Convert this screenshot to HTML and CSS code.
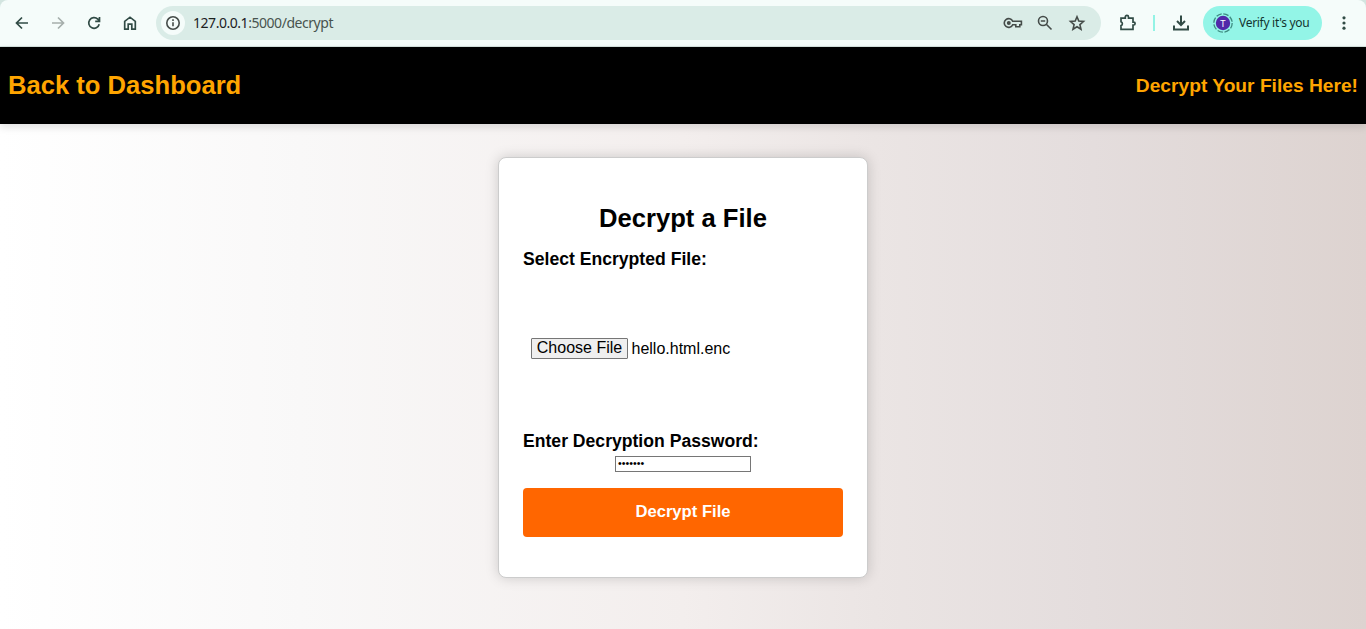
FILE: index.html
```html
<!DOCTYPE html>
<html lang="en">
<head>
<meta charset="utf-8">
<title>Decrypt</title>
<link rel="stylesheet" href="styles.css">
</head>
<body>
<div class="frame"><div class="toolbar">
  <svg class="icon back" viewBox="0 0 20 20"><path d="M16 10H5M10 4.500 4.500 10l5.500 5.500"/></svg>
  <svg class="icon forward" viewBox="0 0 20 20"><path d="M4 10h11M10 4.500 15.500 10 10 15.500"/></svg>
  <svg class="icon reload" viewBox="0 0 20 20"><path d="M15.200 11.200A5.300 5.300 0 1 1 13.800 6.200L15.500 7.900M15.500 4v4.300h-4.300"/></svg>
  <svg class="icon home" viewBox="0 0 20 20"><path d="M4.700 8.300 10 4.200l5.300 4.100v7.900h-3.500v-5H8.200v5H4.700z"/></svg>
  <div class="address">
    <span class="info"><svg class="icon" viewBox="0 0 20 20"><circle cx="10" cy="10" r="6.200"/><path d="M10 9.300v4M10 6.300v1.700"/></svg></span>
    <span class="url"><b>127.0.0.1</b>:5000/decrypt</span>
    <svg class="icon key" viewBox="0 0 20 20"><path d="M9.700 8.300A4.400 4.400 0 1 0 9.700 11.700h3.100v2h4v-2h1.600V8.300z"/><circle class="solid" cx="5.800" cy="10" r="2"/></svg>
    <svg class="icon lens" viewBox="0 0 20 20"><circle cx="8" cy="8" r="4.500"/><path d="M11.300 11.300l5.200 5.200M5.800 8h4.400"/></svg>
    <svg class="icon star" viewBox="0 0 20 20"><path d="M10 3.800l1.800 4.300 4.700.4-3.600 3.100 1.100 4.600-4-2.500-4 2.500 1.100-4.600-3.600-3.100 4.700-.4z"/></svg>
  </div>
  <svg class="icon puzzle" viewBox="0 0 20 20"><path d="M3 5.200h4.300V4a1.600 1.600 0 0 1 3.200 0v1.200H15v4h.7a1.400 1.400 0 0 1 0 2.800H15v4.300H3v-3.700a2 2 0 0 0 0-3.800z"/></svg>
  <span class="divider"></span>
  <svg class="icon download" viewBox="0 0 20 20"><path d="M10 2.500v9M6 8l4 4 4-4M3 12.500v4h14v-4"/></svg>
  <div class="profile">
    <svg class="avatar" viewBox="0 0 20 20"><circle class="ring" cx="10" cy="10" r="9.200"/><circle class="disc" cx="10" cy="10" r="7.200"/><text x="10" y="13.500">T</text></svg>
    <span>Verify it's you</span>
  </div>
  <svg class="icon dots" viewBox="0 0 20 20"><circle class="solid" cx="10" cy="4.800" r="1.600"/><circle class="solid" cx="10" cy="10" r="1.600"/><circle class="solid" cx="10" cy="15.200" r="1.600"/></svg>
</div></div>
<header class="nav">
  <h1>Back to Dashboard</h1>
  <h2>Decrypt Your Files Here!</h2>
</header>
<main class="page">
  <form class="card">
    <h2 class="title">Decrypt a File</h2>
    <label>Select Encrypted File:</label>
    <div class="file"><button type="button" class="choose">Choose File</button><span>hello.html.enc</span></div>
    <label>Enter Decryption Password:</label>
    <div class="password">•••••••</div>
    <button type="button" class="submit">Decrypt File</button>
  </form>
</main>
</body>
</html>
```
FILE: styles.css
```css
* { box-sizing: border-box; }
body {
  margin: 0;
  height: 629px;
  display: flex;
  flex-direction: column;
  overflow: hidden;
  font-family: "Liberation Sans", Arial, sans-serif;
}
.frame { background: #d3e5e0; height: 47px; flex: none; }
.toolbar {
  display: flex;
  align-items: center;
  height: 47px;
  padding: 0 12px;
  background: #f5fcfa;
  border-bottom: 1px solid #d5e3df;
  border-radius: 8px 8px 0 0;
  font-family: "Noto Sans", sans-serif;
}
.icon {
  width: 20px;
  height: 20px;
  flex: none;
  fill: none;
  stroke: #314b45;
  stroke-width: 1.7;
}
.icon .solid { fill: #314b45; stroke: none; }
.forward { margin-left: 16px; stroke: #a6afac; }
.reload { margin-left: 16px; }
.home { margin-left: 16px; }
.address {
  display: flex;
  align-items: center;
  width: 945px;
  height: 34px;
  margin-left: 16px;
  padding: 0 14px 0 5px;
  border-radius: 17px;
  background: #daece7;
}
.address .icon { stroke: #454c49; stroke-width: 1.6; }
.address .icon .solid { fill: #454c49; }
.info {
  display: flex;
  align-items: center;
  justify-content: center;
  width: 24px;
  height: 24px;
  border-radius: 50%;
  background: #f5fcfa;
}
.url {
  flex: 1;
  margin-left: 8px;
  padding-bottom: 2px;
  font-size: 14px;
  letter-spacing: -0.46px;
  color: #48544f;
}
.url b { font-weight: 400; color: #1c211f; }
.lens, .star { margin-left: 12px; }
.puzzle { margin-left: 17px; }
.divider { width: 2px; height: 16px; margin-left: 15px; background: #93f3e5; }
.icon.download { margin-left: 16px; stroke-width: 2; }
.profile {
  display: flex;
  align-items: center;
  gap: 6px;
  width: 119px;
  height: 34px;
  margin-left: 12px;
  padding-left: 10px;
  border-radius: 17px;
  background: #93f5e7;
  color: #12342f;
  font-size: 12px;
  white-space: nowrap;
}
.profile span { padding-bottom: 1px; letter-spacing: -0.29px; }
.avatar { width: 20px; height: 20px; flex: none; }
.ring { fill: none; stroke: #3e8b80; stroke-width: 1.3; stroke-dasharray: 5.600 1.625; }
.disc { fill: #5129a9; }
.avatar text { fill: #fff; font-size: 9.500px; text-anchor: middle; }
.dots { margin-left: 12px; }
.nav {
  position: relative;
  display: flex;
  align-items: center;
  justify-content: space-between;
  flex: none;
  height: 77px;
  padding: 0 8px;
  background: #000;
  color: orange;
  box-shadow: 0 3px 8px rgba(0, 0, 0, 0.12);
}
.nav h1 { margin: 0; font-size: 25.6px; }
.nav h2 { margin: 0; font-size: 19.2px; }
.page {
  flex: 1;
  padding-top: 33px;
  background: linear-gradient(to right, #fff, #f9f8f8 22%, #f3eeed 50%, #ebe5e4 64%, #e4dddd 80%, #ddd3d0);
}
.card {
  display: flex;
  flex-direction: column;
  width: 370px;
  height: 421px;
  margin: 0 auto;
  padding: 45px 24px 0;
  background: #fff;
  border: 1px solid #ccc;
  border-radius: 8px;
  box-shadow: 0 0 13px rgba(0, 0, 0, 0.17);
}
.title { margin: 0 0 16px; text-align: center; font-size: 25.6px; line-height: 30px; }
.card label { font-size: 17.6px; font-weight: 700; line-height: 20px; }
.file {
  display: flex;
  align-items: center;
  gap: 3.500px;
  height: 162px;
  padding: 0 0 3px 8px;
  font-size: 16px;
}
.file span { padding-top: 1px; }
.choose {
  width: 97px;
  height: 21px;
  padding: 0 0 2px;
  border: 1px solid #767676;
  border-radius: 1px;
  background: #efefef;
  color: #000;
  font: 16px/18px "Liberation Sans", Arial, sans-serif;
}
.password {
  align-self: center;
  width: 136px;
  height: 16px;
  margin-top: 5px;
  padding-left: 2px;
  border: 1px solid #767676;
  font-size: 10.700px;
  line-height: 13px;
}
.submit {
  height: 49px;
  margin-top: 16px;
  padding: 0 0 2px;
  border: 0;
  border-radius: 4px;
  background: #f60;
  color: #fff;
  font: 700 16.640px "Liberation Sans", Arial, sans-serif;
}
```
